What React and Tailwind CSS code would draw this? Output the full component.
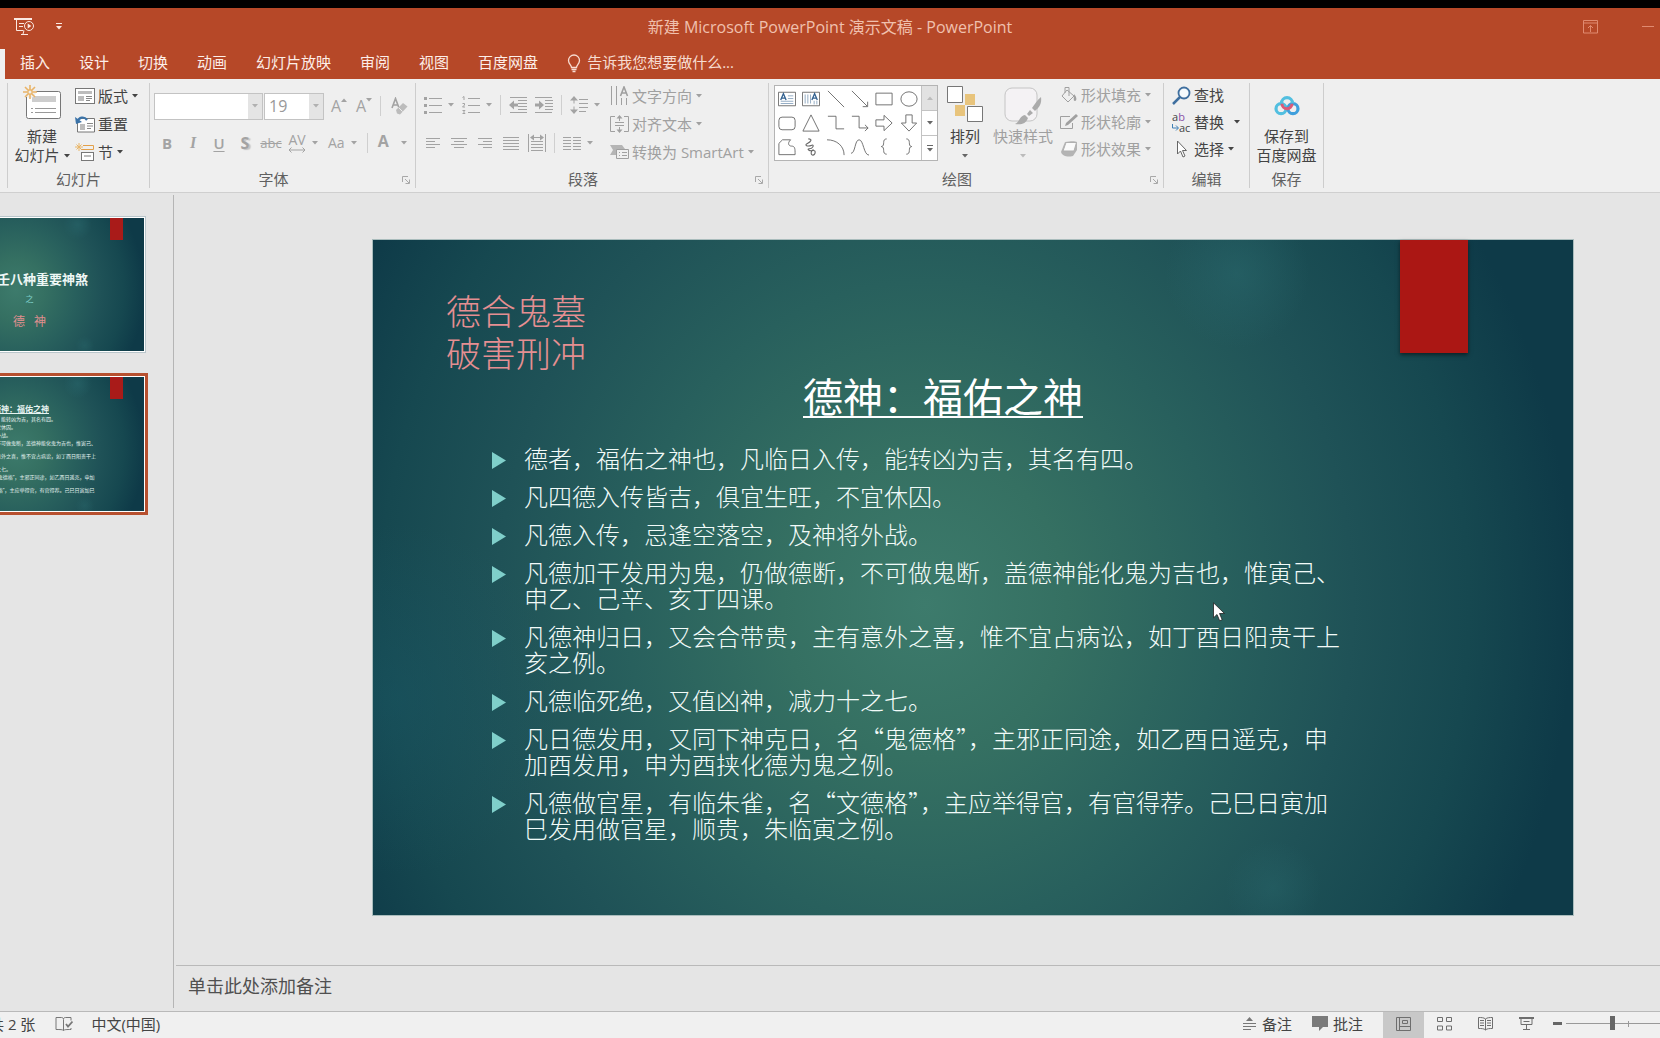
import clsx from "clsx"

const tabs = ["插入", "设计", "切换", "动画", "幻灯片放映", "审阅", "视图", "百度网盘"]

const points = [
  "德者，福佑之神也，凡临日入传，能转凶为吉，其名有四。",
  "凡四德入传皆吉，俱宜生旺，不宜休囚。",
  "凡德入传，忌逢空落空，及神将外战。",
  "凡德加干发用为鬼，仍做德断，不可做鬼断，盖德神能化鬼为吉也，惟寅己、申乙、己辛、亥丁四课。",
  "凡德神归日，又会合带贵，主有意外之喜，惟不宜占病讼，如丁酉日阳贵干上亥之例。",
  "凡德临死绝，又值凶神，减力十之七。",
  "凡日德发用，又同下神克日，名“鬼德格”，主邪正同途，如乙酉日遥克，申加酉发用，申为酉挟化德为鬼之例。",
  "凡德做官星，有临朱雀，名“文德格”，主应举得官，有官得荐。己巳日寅加巳发用做官星，顺贵，朱临寅之例。",
]

const slideBg =
  "bg-[radial-gradient(ellipse_6%_11%_at_72%_5%,#2a6a6e80,#2a6a6e00),radial-gradient(ellipse_4%_7%_at_75%_96%,#2a6a6e60,#2a6a6e00),radial-gradient(ellipse_14%_26%_at_2%_68%,#1a5a6866,#1a5a6800),radial-gradient(ellipse_54%_104%_at_46%_54%,#3d7b6c_0%,#357062_22%,#28605d_46%,#1f5257_66%,#164850_84%,#0e3a48_100%)]"

/* Small shared pieces */

function Caret({ className }) {
  return (
    <svg className={clsx("w-[6px] h-[4px] shrink-0", className)} viewBox="0 0 6 4" fill="currentColor" aria-hidden="true">
      <path d="M0 0h6L3 3.6z" />
    </svg>
  )
}

function Icon({ className = "w-[18px] h-[18px]", box = "0 0 18 18", children }) {
  return (
    <svg className={clsx("shrink-0", className)} viewBox={box} fill="none" stroke="currentColor" aria-hidden="true">
      {children}
    </svg>
  )
}

function Separator() {
  return <span className="w-px h-5 bg-[#cfcfcf] shrink-0" />
}

function Group({ label, launcher, width, children }) {
  return (
    <section className={clsx("flex flex-col my-1 border-r border-[#cdcdcd] shrink-0", width)} aria-label={label}>
      <div className="h-[88px] flex">{children}</div>
      <div className="flex items-center leading-[17px] text-[#606060]">
        <span className="flex-1 text-center">{label}</span>
        {launcher && (
          <button className="w-[18px] flex justify-center text-[#a8a8a8]" aria-label={`${label}选项`}>
            <Launcher />
          </button>
        )}
      </div>
    </section>
  )
}

function Launcher() {
  return (
    <Icon className="w-2 h-2" box="0 0 8 8">
      <path d="M.5 6V.5H6M3 3l4 4M7.5 3.5v4h-4" />
    </Icon>
  )
}

function IconButton({ label, width = "w-[18px]", caret, disabled = true, children }) {
  return (
    <button className={clsx("h-7 flex items-center shrink-0", caret ? "gap-[6px]" : "justify-center", !caret && width, disabled ? "text-[#a3a3a3]" : "text-[#444]")} aria-label={label}>
      {children}
      {caret && <Caret />}
    </button>
  )
}

function RowButton({ icon, label, caret, disabled, height = "h-7", caretGap = "ml-1" }) {
  return (
    <button className={clsx("flex items-center pb-[3px] whitespace-nowrap", height, disabled ? "text-[#a0a0a0]" : "text-[#444]")}>
      {icon}
      <span className="ml-[3px]">{label}</span>
      {caret && <Caret className={caretGap} />}
    </button>
  )
}

/* Title bar */

function TitleBar() {
  return (
    <div className="grid grid-cols-[1fr_auto_1fr] items-center h-[41px] pb-1 text-[#f5d9cf]">
      <div className="flex items-center pl-[14px] gap-[22px] text-[#fbe9e2]">
        <button aria-label="从头开始放映">
          <Icon className="w-5 h-5" box="0 0 20 20">
            <path d="M0 2h18" strokeWidth="2" />
            <path d="M2.5 3v10.5h7M5 6.500h5M5 9.500h4M7 17.500h7M9 17l1-3.500" />
            <circle cx="15" cy="9" r="4.500" />
            <path d="M13.700 6.500v5l3.600-2.500z" fill="currentColor" stroke="none" />
          </Icon>
        </button>
        <button aria-label="自定义快速访问工具栏">
          <Icon className="w-[6px] h-[7px]" box="0 0 6 7">
            <path d="M0 .5h6" />
            <path d="M0 3h6L3 6.600z" fill="currentColor" stroke="none" />
          </Icon>
        </button>
      </div>
      <h1 className="text-base leading-5 text-[#f0c0ae]">新建 Microsoft PowerPoint 演示文稿 - PowerPoint</h1>
      <div className="flex items-center justify-end gap-[44px] pr-[6px] text-[#e08a70]">
        <button aria-label="功能区显示选项">
          <Icon className="w-[15px] h-[14px]" box="0 0 15 14">
            <path d="M.5.500h14v12.500H.500zM.500 3h14M7.500 12V5.500M5 8l2.500-2.500L10 8" />
          </Icon>
        </button>
        <button aria-label="最小化">
          <Icon className="w-3 h-[14px]" box="0 0 12 14">
            <path d="M0 6.500h12" />
          </Icon>
        </button>
      </div>
    </div>
  )
}

function TabBar() {
  return (
    <nav className="flex h-[30px]">
      <span className="w-[5px] bg-[#f0f0f0]" />
      <div className="flex items-center gap-[29px] pl-[15px] pb-1 text-[#fdeee8]">
        {tabs.map((tab) => (
          <button key={tab}>{tab}</button>
        ))}
        <button className="flex items-center gap-[6px] text-[#f7dcd1]">
          <Icon className="w-[14px] h-[19px] mt-[2px]" box="0 0 14 19">
            <path d="M4.500 13.500c0-2.500-3-3.500-3-7a5.500 5.500 0 0 1 11 0c0 3.500-3 4.500-3 7zM4.500 15.500h5M5.500 17.500h3" strokeWidth="1.300" />
          </Icon>
          告诉我您想要做什么...
        </button>
      </div>
    </nav>
  )
}

/* Ribbon groups */

function SlidesGroup() {
  return (
    <Group label="幻灯片" width="w-[142px]">
      <button className="ml-[6px] w-[56px] flex flex-col items-center text-[#444] leading-[19px] whitespace-nowrap">
        <Icon className="w-[40px] h-[36px] mt-[1px] mb-[7px]" box="0 0 40 36">
          <rect x="4.500" y="7.500" width="34" height="27" rx="2" fill="#fff" stroke="#777" />
          <path d="M10 12h24v6H10z" fill="#cdcdcd" stroke="none" />
          <path d="M9 24.500h2M13 24.500h21M9 28.500h2M13 28.500h21" stroke="#999" />
          <circle cx="8" cy="8" r="6" fill="#efefef" stroke="none" />
          <path d="M8 1v4M8 11v4M1 8h4M11 8h4M3 3l3 3M10 10l3 3M13 3l-3 3M6 10l-3 3" stroke="#e9b468" strokeWidth="1.600" />
          <circle cx="8" cy="8" r="2.200" stroke="#e9b468" strokeWidth="1.400" />
        </Icon>
        <span>新建</span>
        <span className="flex items-center gap-1">
          幻灯片
          <Caret />
        </span>
      </button>
      <div className="ml-[5px] flex flex-col items-start">
        <RowButton
          label="版式"
          caret
          icon={
            <Icon className="w-5 h-4" box="0 0 20 16">
              <rect x=".5" y=".5" width="19" height="15" fill="#fff" stroke="#777" />
              <path d="M3 3h14v3H3zM3 8h6v5H3z" fill="#bdbdbd" stroke="none" />
              <path d="M11 8.500h6M11 10.500h6M11 12.500h4" stroke="#888" />
            </Icon>
          }
        />
        <RowButton
          label="重置"
          icon={
            <Icon className="w-5 h-[18px]" box="0 0 20 18">
              <path d="M6 3.500h13.500v13.500h-17V8" fill="#fff" stroke="#777" />
              <path d="M5 9h5v6H5z" fill="#bdbdbd" stroke="none" />
              <path d="M12 8.500h6M12 11h6M12 13.500h4" stroke="#888" />
              <path d="M2 7c2-5 7-6 10-2" stroke="#3b73a8" strokeWidth="2.200" />
              <path d="M0 2l1 7 6-2z" fill="#3b73a8" stroke="none" />
            </Icon>
          }
        />
        <RowButton
          label="节"
          caret
          icon={
            <Icon className="w-5 h-[18px]" box="0 0 20 18">
              <path d="M8 2.500h10.500v4H6" stroke="#e3a04a" />
              <path d="M4 0v8M0 4h8M1.500 1.500l5 5M6.500 1.500l-5 5" stroke="#e9b668" />
              <rect x="6.500" y="9.500" width="12" height="8" fill="#fff" stroke="#777" />
              <path d="M9 12h7v2H9z" fill="#bdbdbd" stroke="none" />
            </Icon>
          }
        />
      </div>
    </Group>
  )
}

function ComboBox({ label, width, options }) {
  return (
    <div className={clsx("relative h-[27px]", width)}>
      <select aria-label={label} className="appearance-none w-full h-full pl-1 border border-[#c3c3c3] bg-white text-base leading-6 text-[#999]">
        {options.map((o) => (
          <option key={o}>{o}</option>
        ))}
      </select>
      <span className="absolute right-px top-px bottom-px w-[14px] bg-[#e4e4e4] flex items-center justify-center text-[#b0b0b0] pointer-events-none">
        <Caret />
      </span>
    </div>
  )
}

function FontGroup() {
  return (
    <Group label="字体" launcher width="w-[266px]">
      <div className="pt-[9px] pl-1 flex flex-col gap-[9px]">
        <div className="flex items-center h-7 gap-px">
          <ComboBox label="字体名称" width="w-[109px]" options={[""]} />
          <ComboBox label="字号" width="w-[60px]" options={["19"]} />
          <span className="w-px" />
          <IconButton label="增大字号" width="w-6">
            <span className="text-base font-medium">A</span>
            <Caret className="rotate-180 mb-3" />
          </IconButton>
          <IconButton label="减小字号" width="w-6">
            <span className="text-base font-medium">A</span>
            <Caret className="mb-3" />
          </IconButton>
          <span className="w-0.5" />
          <Separator />
          <span className="w-1" />
          <IconButton label="清除格式" width="w-6">
            <Icon className="w-[17px] h-[18px]" box="0 0 17 18">
              <path d="M1 11L4.500 1.500 8 11M2.200 8h4.600" strokeWidth="1.600" />
              <path d="M5 13l7-7 4.500 3.500-7.500 8-3-1z" fill="#bcbcbc" stroke="none" />
              <path d="M7.500 10.500l4 4" stroke="#efefef" />
            </Icon>
          </IconButton>
        </div>
        <div className="flex items-center h-7">
          <IconButton label="加粗" width="w-[26px]">
            <b>B</b>
          </IconButton>
          <IconButton label="倾斜" width="w-[26px]">
            <i className="font-['Liberation_Serif',serif] font-bold text-base">I</i>
          </IconButton>
          <IconButton label="下划线" width="w-[26px]">
            <u className="font-semibold underline-offset-2">U</u>
          </IconButton>
          <IconButton label="文字阴影" width="w-[26px]">
            <b className="text-base [text-shadow:2px_1px_1px_#c4c4c4]">S</b>
          </IconButton>
          <IconButton label="删除线" width="w-[26px]">
            <s className="text-[13px]">abc</s>
          </IconButton>
          <span className="w-1" />
          <IconButton label="字符间距" caret>
            <span className="flex flex-col items-center leading-3 text-[14px]">
              AV
              <Icon className="w-[18px] h-[6px] mt-[1px]" box="0 0 18 6">
                <path d="M1 3h16M3.500.500L1 3l2.500 2.500M14.500.500L17 3l-2.500 2.500" />
              </Icon>
            </span>
          </IconButton>
          <span className="w-[10px]" />
          <IconButton label="更改大小写" caret>
            <span className="text-[14px]">Aa</span>
          </IconButton>
          <span className="w-[10px]" />
          <Separator />
          <span className="w-[10px]" />
          <button className="h-7 flex items-center gap-3 text-[#a3a3a3]" aria-label="字体颜色">
            <b className="text-base pb-1">A</b>
            <Caret />
          </button>
        </div>
      </div>
    </Group>
  )
}

function ParagraphGroup() {
  return (
    <Group label="段落" launcher width="w-[353px]">
      <div className="pt-[8px] pl-[8px] w-[194px] flex flex-col gap-[10px]">
        <div className="flex items-center gap-2">
          <IconButton label="项目符号" caret>
            <Icon>
              <path d="M5 2.500h13M5 9.500h13M5 16.500h13" />
              <path d="M0 1h3v3H0zM0 8h3v3H0zM0 15h3v3H0z" fill="currentColor" stroke="none" />
            </Icon>
          </IconButton>
          <IconButton label="编号" caret>
            <Icon>
              <path d="M6 2.500h12M6 9.500h12M6 16.500h12" />
              <path d="M.5 1.500l1.500-1V4M.5 7.500h2v1.500l-2 2h2.500M.5 14.500H3l-1.500 1.500L3 17.500H.5" />
            </Icon>
          </IconButton>
          <Separator />
          <IconButton label="降低列表级别">
            <Icon>
              <path d="M1 1.500h17M9 4.500h9M9 7.500h9M9 10.500h9M9 13.500h9M1 16.500h17" />
              <path d="M0 9l5-4.500v3h4v3H5v3z" fill="currentColor" stroke="none" />
            </Icon>
          </IconButton>
          <IconButton label="提高列表级别">
            <Icon>
              <path d="M0 1.500h17M10 4.500h8M10 7.500h8M10 10.500h8M10 13.500h8M0 16.500h17" />
              <path d="M9 9L4 4.500v3H0v3h4v3z" fill="currentColor" stroke="none" />
            </Icon>
          </IconButton>
          <Separator />
          <IconButton label="行距" caret>
            <Icon>
              <path d="M9 3.500h9M9 7.500h9M9 11.500h9M9 15.500h7M4 3v4.500M4 10.500V15" />
              <path d="M4 0l4 4.500H0zM4 18l4-4.500H0z" fill="currentColor" stroke="none" />
            </Icon>
          </IconButton>
        </div>
        <div className="flex items-center gap-2">
          <IconButton label="左对齐">
            <Icon>
              <path d="M2 4.500h14M2 7.500h9M2 10.500h14M2 13.500h9" />
            </Icon>
          </IconButton>
          <IconButton label="居中">
            <Icon>
              <path d="M1 4.500h16M4 7.500h10M1 10.500h16M4 13.500h10" />
            </Icon>
          </IconButton>
          <IconButton label="右对齐">
            <Icon>
              <path d="M2 4.500h14M7 7.500h9M2 10.500h14M7 13.500h9" />
            </Icon>
          </IconButton>
          <IconButton label="两端对齐">
            <Icon>
              <path d="M1 3.500h16M1 6.500h16M1 9.500h16M1 12.500h16M1 15.500h16" />
            </Icon>
          </IconButton>
          <IconButton label="分散对齐">
            <Icon>
              <path d="M.5 0v18M17.500 0v18M3 7.500h12M3 10.500h12M3 13.500h12M3 16.500h12M4 3.500h10" />
              <path d="M2 3.500L6 .5v6zM16 3.500l-4-3v6z" fill="currentColor" stroke="none" />
            </Icon>
          </IconButton>
          <Separator />
          <IconButton label="分栏" caret>
            <Icon>
              <path d="M0 3.500h8M0 6.500h8M0 9.500h8M0 12.500h8M0 15.500h8M10 3.500h8M10 6.500h8M10 9.500h8M10 12.500h8M10 15.500h8" />
            </Icon>
          </IconButton>
        </div>
      </div>
      <div className="flex flex-col items-start">
        <RowButton
          label="文字方向"
          caret
          disabled
          icon={
            <Icon className="w-[19px] h-5" box="0 0 19 20">
              <path d="M1.500 0v19M6.500 0v19M11.500 12v7M16.500 12v7" />
              <path d="M10.500 10L14 1l3.500 9M11.700 7h4.600" strokeWidth="1.600" />
            </Icon>
          }
        />
        <RowButton
          label="对齐文本"
          caret
          disabled
          icon={
            <Icon className="w-[19px] h-[18px]" box="0 0 19 18">
              <path d="M5 1.500H.500v15H5M14 1.500h4.500v15H14M5 7.500h9M5 10.500h9M9.500 1v5M9.500 12v5" />
              <path d="M9.500 0l3 3.500h-6zM9.500 18l3-3.500h-6z" fill="currentColor" stroke="none" />
            </Icon>
          }
        />
        <RowButton
          label="转换为 SmartArt"
          caret
          disabled
          icon={
            <Icon className="w-[19px] h-4" box="0 0 19 16">
              <path d="M0 1h12l3 4H8v6H0l3-5z" fill="#b5b5b5" stroke="none" />
              <path d="M6.500 5.500h12v9h-12z" fill="#efefef" />
              <path d="M9 8.500h1M12 8.500h5M9 11.500h1M12 11.500h5" />
            </Icon>
          }
        />
      </div>
    </Group>
  )
}

const shapes = [
  ["文本框", <g key="g"><path d="M.5 2.500h19v15H.500z" /><path d="M11 6.500h6M11 9.500h6M3 12.500h14M3 15h14" stroke="#8aa5c0" /><path d="M3 11l3-7 3 7M4 9h4" stroke="#31608f" strokeWidth="1.500" /></g>],
  ["竖排文本框", <g key="g"><path d="M.5 2.500h19v15H.500z" /><path d="M3.500 5v10M6.500 5v10M9.500 5v10M13.500 12v4M16.500 12v4" stroke="#8aa5c0" /><path d="M11 11l3-7 3 7M12 9h4" stroke="#31608f" strokeWidth="1.500" /></g>],
  ["直线", <path key="p" d="M1 1l18 18" />],
  ["箭头", <path key="p" d="M1 1l17 17M18.500 13v5.500H13" />],
  ["矩形", <path key="p" d="M1 3.500h18v13H1z" />],
  ["椭圆", <ellipse key="e" cx="10" cy="10" rx="9" ry="8" />],
  ["圆角矩形", <rect key="r" x="1" y="3.500" width="18" height="14" rx="3.500" />],
  ["三角形", <path key="p" d="M10 1l9 18H1z" />],
  ["肘形连接符", <path key="p" d="M1 2.500h9v14h9" />],
  ["肘形箭头", <path key="p" d="M1 2.500h8v13h10M15.500 12L19 15.500 15.500 19" />],
  ["右箭头", <path key="p" d="M1 6.500h9v-5l9 8.500-9 8.500v-5H1z" />],
  ["下箭头", <path key="p" d="M6.500 1v9h-5l8.500 9 8.500-9h-5V1z" />],
  ["任意多边形", <path key="p" d="M1 18.500V6l4-4h9c-4 4-2 7 1 7 4 0 4 3 4 9.500z" />],
  ["自由曲线", <path key="p" d="M7 1c5 0 3 3-1 5s0 4 5 2c3-1 1 4-3 4-3 0 0 3 4 2s3 5 0 5c-3 0-2-6 1-6" strokeWidth="1.200" />],
  ["弧形", <path key="p" d="M0 2c11 0 19 7 19 17" />],
  ["曲线", <path key="p" d="M0 17C5 17 4 2 9 2s5 17 11 17" />],
  ["左大括号", <path key="p" d="M13 1c-6 0-1 8-6 8.500 5 .5 0 8.500 6 8.500" />],
  ["右大括号", <path key="p" d="M7 1c6 0 1 8 6 8.500-5 .5 0 8.500-6 8.500" />],
]

function DrawingGroup() {
  return (
    <Group label="绘图" launcher width="w-[395px]">
      <div className="ml-[5px] mt-[2px] h-[76px] flex border border-[#b4b4b4] bg-white">
        <div className="grid grid-cols-6 content-center w-[146px]">
          {shapes.map(([name, drawing]) => (
            <button key={name} aria-label={name} className="w-6 h-6 flex items-center justify-center text-[#666]">
              <Icon className="w-[18px] h-[18px]" box="0 0 20 20">
                {drawing}
              </Icon>
            </button>
          ))}
        </div>
        <div className="w-4 flex flex-col border-l border-[#c3c3c3] divide-y divide-[#c3c3c3] text-[#666]">
          <button aria-label="上一行" className="flex-1 flex items-center justify-center bg-[#e2e2e2] text-[#bbb]">
            <Caret className="rotate-180" />
          </button>
          <button aria-label="下一行" className="flex-1 flex items-center justify-center">
            <Caret />
          </button>
          <button aria-label="其他形状" className="flex-1 flex items-center justify-center">
            <Icon className="w-[6px] h-[7px]" box="0 0 6 7">
              <path d="M0 .5h6" />
              <path d="M0 3h6L3 6.600z" fill="currentColor" stroke="none" />
            </Icon>
          </button>
        </div>
      </div>
      <button className="ml-[2px] w-[50px] flex flex-col items-center leading-[19px] text-[#444]">
        <Icon className="w-[36px] h-[36px] mt-[3px] mb-[5px]" box="0 0 36 36">
          <path d="M18 8h10v11H18zM8 19h10v11H8z" fill="#e8c47c" stroke="none" />
          <path d="M.5.500h15v16H.500zM20.500 20.500h15v15h-15z" fill="#fff" stroke="#777" />
        </Icon>
        <span>排列</span>
        <Caret className="mt-2 text-[#666]" />
      </button>
      <button className="ml-[2px] w-[62px] flex flex-col items-center leading-[19px] text-[#a0a0a0]">
        <Icon className="w-[38px] h-[38px] mt-[4px] mb-[2px]" box="0 0 38 38">
          <rect x="1" y="1" width="32" height="33" rx="7" stroke="#c4c4c4" fill="#f4f2f4" />
          <path d="M37 10c1 7-2 11-6 14l-3-3c3-4 5-8 9-11zM26 23l3 3-4 3-2-2zM21 28l3 3c-2 6-7 7-13 6 5-2 4-8 10-9z" fill="#ababab" stroke="none" />
        </Icon>
        <span>快速样式</span>
        <Caret className="mt-2 text-[#bbb]" />
      </button>
      <div className="ml-[6px] flex flex-col items-start">
        <RowButton
          label="形状填充"
          height="h-[27px]"
          caret
          disabled
          icon={
            <Icon>
              <path d="M7 4l7 6-6 6-6-6zM5 7V1.500h4V10" />
              <path d="M14 8c3 3 3 7 1 7s-1-3-1-7z" fill="currentColor" stroke="none" />
            </Icon>
          }
        />
        <RowButton
          label="形状轮廓"
          height="h-[27px]"
          caret
          disabled
          icon={
            <Icon>
              <path d="M10 3.500H.500v12h12V10" />
              <path d="M16 1l2 2-10 9-3 1 1-3z" fill="currentColor" stroke="none" />
            </Icon>
          }
        />
        <RowButton
          label="形状效果"
          height="h-[27px]"
          caret
          disabled
          icon={
            <Icon>
              <path d="M1 12l4-10c6-1 10-1 12 0v8l-4 6c-5 1-10 1-12-4z" fill="#b4b4b4" stroke="none" />
              <path d="M6 2.500h10.500L14 11H3z" fill="#fafafa" stroke="#b0b0b0" />
            </Icon>
          }
        />
      </div>
    </Group>
  )
}

function EditGroup() {
  return (
    <Group label="编辑" width="w-[86px]">
      <div className="pl-2 flex flex-col items-start">
        <RowButton
          label="查找"
          height="h-[27px]"
          icon={
            <Icon className="w-[19px] h-[19px]" box="0 0 19 19">
              <circle cx="12" cy="7" r="5.500" stroke="#3f6f9f" strokeWidth="1.800" fill="#f6fafd" />
              <path d="M8 11l-7 7" stroke="#3f6f9f" strokeWidth="2.500" />
            </Icon>
          }
        />
        <RowButton
          label="替换"
          height="h-[27px]"
          caret
          caretGap="ml-[10px]"
          icon={
            <span className="w-[19px] text-[11px] leading-[11px] text-left">
              <span className="block">
                a<span className="text-[#8a4fa8]">b</span>
              </span>
              <span className="flex items-center">
                <Icon className="w-[7px] h-[7px] text-[#3f7fb5]" box="0 0 7 7">
                  <path d="M.5 0v4H6M4 1.500L6.500 4 4 6.500" />
                </Icon>
                ac
              </span>
            </span>
          }
        />
        <RowButton
          label="选择"
          height="h-[27px]"
          caret
          icon={
            <Icon className="w-[19px] h-[18px]" box="0 0 19 18">
              <path d="M5.500 1v13l3-3 2.500 6 2-1-2.500-5.500h4z" fill="#fff" stroke="#666" />
            </Icon>
          }
        />
      </div>
    </Group>
  )
}

function SaveGroup() {
  return (
    <Group label="保存" width="w-[74px]">
      <button className="flex-1 flex flex-col items-center leading-[19px] text-[#444]">
        <Icon className="w-[26px] h-[22px] mt-[11px] mb-[11px]" box="0 0 28 24">
          <circle cx="7.500" cy="16" r="5.500" stroke="#52bfe0" strokeWidth="3.500" />
          <circle cx="20.500" cy="16" r="5.500" stroke="#3f9fdc" strokeWidth="3.500" />
          <path d="M8 10a6 6 0 0 1 12 0" stroke="#52bfe0" strokeWidth="3.500" />
          <path d="M8.500 10.500a5.500 5.500 0 0 0 11 0" stroke="#dc5a78" strokeWidth="3.200" />
        </Icon>
        <span>保存到</span>
        <span>百度网盘</span>
      </button>
    </Group>
  )
}

/* Slides */

function TitleThumbnail() {
  return (
    <button className="-ml-[95px] w-[241px] border border-[#b9c6cb] p-px bg-white block" aria-label="幻灯片 1">
      <div className={clsx("relative aspect-video flex flex-col pt-[52px] overflow-hidden", slideBg)}>
        <span className="absolute right-[21px] top-0 w-[13px] h-[22px] bg-[#a91b19]" />
        <span className="text-right pr-[56px] text-[13px] leading-[18px] font-bold text-[#eef7f5]">壬八种重要神煞</span>
        <span className="pl-2 text-center text-[8px] leading-[22px] text-[#7fd0cb]">之</span>
        <span className="pl-2 text-center text-[12px] leading-6 text-[#e08f8f]">德&ensp; 神</span>
      </div>
    </button>
  )
}

function ContentThumbnail() {
  return (
    <button className="-ml-[97px] w-[245px] border-3 border-[#b7502f] bg-white p-px block text-left" aria-label="幻灯片 2" aria-current="true">
      <div className={clsx("relative aspect-video overflow-hidden pt-[28px] pl-[19px] text-[#e6f3f1]", slideBg)}>
        <span className="absolute right-[21px] top-0 w-[13px] h-[22px] bg-[#a91b19]" />
        <span className="block pl-[67px] text-[8px] leading-[8px] font-bold underline">德神：福佑之神</span>
        <ul className="mt-[4px] w-[172px] flex flex-col gap-[3px] text-[5px] leading-[5px]">
          {points.map((p) => (
            <li key={p}>{p}</li>
          ))}
        </ul>
      </div>
    </button>
  )
}

function Slide() {
  return (
    <article className={clsx("relative aspect-video pt-[49px] pl-[73px] outline outline-[#a9bcbc]", slideBg)}>
      <span className="absolute right-[105px] top-0 w-[68px] h-[113px] bg-[#ab1714] shadow-[0_2px_4px_#00000080]" />
      <p className="w-[140px] text-[35px] leading-[42px] font-light text-[#e58f92]">德合鬼墓破害刑冲</p>
      <h2 className="ml-[357px] text-[40px] leading-[44px] text-white underline decoration-2 underline-offset-[4px]">德神：福佑之神</h2>
      <ul className="mt-[28px] ml-[46px] w-[850px] flex flex-col gap-3 text-2xl leading-[26px] font-light text-[#f2fbf9]">
        {points.map((p) => (
          <li key={p} className="flex">
            <svg className="w-[14px] h-[17px] mt-[7px] mr-[18px] shrink-0" viewBox="0 0 14 17" fill="#7fcfca" aria-hidden="true">
              <path d="M0 0l14 8.500L0 17z" />
            </svg>
            <span>{p}</span>
          </li>
        ))}
      </ul>
      <svg className="absolute left-[840px] top-[362px] w-[12px] h-[20px]" viewBox="0 0 12 20" aria-hidden="true">
        <path d="M.5.800v15l3.500-3.300 2.700 6.300 2.500-1.100L6.500 11.500h5z" fill="#fff" stroke="#222" strokeWidth=".8" />
      </svg>
    </article>
  )
}

/* Status bar */

function StatusBar() {
  return (
    <footer className="flex items-center h-[27px] pb-[3px] border-t border-[#b9b9b9] bg-[#f0f0f0] text-[#444] overflow-hidden whitespace-nowrap">
      <span className="-ml-[11px]">共 2 张</span>
      <button className="ml-5" aria-label="拼写检查">
        <Icon className="w-[18px] h-4 text-[#777]" box="0 0 18 16">
          <path d="M8.500 14.500c-1-1-3-1-7.500-1v-12h5.500c1.500 0 2 1 2 2zM8.500 3c0-1 1-1.500 2-1.500H16v3M8.500 14.500c1-1 3-1 7.500-1V12" />
          <path d="M11 8l2 2.500 4.500-5" strokeWidth="1.800" />
        </Icon>
      </button>
      <button className="ml-[18px]">中文(中国)</button>
      <div className="ml-auto flex items-center h-full">
        <button className="flex items-center gap-[6px]">
          <Icon className="w-[13px] h-[14px] text-[#777]" box="0 0 13 14">
            <path d="M0 6.500h13M0 9.500h13M0 12.500h8" />
            <path d="M6.500 0L10 4H3z" fill="currentColor" stroke="none" />
          </Icon>
          备注
        </button>
        <button className="ml-5 flex items-center gap-[5px]">
          <Icon className="w-4 h-[15px] text-[#7a7a7a]" box="0 0 16 15">
            <path d="M0 0h16v11h-5l-4 4v-4H0z" fill="currentColor" stroke="none" />
          </Icon>
          批注
        </button>
        <div className="ml-5 -mb-[3px] flex self-stretch text-[#6e6e6e]">
          <button className="w-[41px] pb-[3px] flex items-center justify-center bg-[#c8c8c8]" aria-label="普通视图" aria-pressed="true">
            <Icon className="w-[15px] h-[14px]" box="0 0 15 14">
              <path d="M.5.500h14v13H.500zM3.500.500v13M3.500 9.500h11M6.500 3.500h5v3h-5z" />
            </Icon>
          </button>
          <button className="w-[41px] pb-[3px] flex items-center justify-center" aria-label="幻灯片浏览">
            <Icon className="w-[15px] h-[14px]" box="0 0 15 14">
              <path d="M.5.500h5v4h-5zM9.500.500h5v4h-5zM.5 9h5v4h-5zM9.500 9h5v4h-5z" />
            </Icon>
          </button>
          <button className="w-[41px] pb-[3px] flex items-center justify-center" aria-label="阅读视图">
            <Icon className="w-[15px] h-[14px]" box="0 0 15 14">
              <path d="M7.500 2C6 .5 3 .5.500.500v11c3 0 5.500 0 7 1.500 1.500-1.500 4-1.500 7-1.500V.500c-2.500 0-5.500 0-7 1.500zM7.500 2v11M2 3.500h4M2 6h4M2 8.500h4M9 3.500h4M9 6h4M9 8.500h4" />
            </Icon>
          </button>
          <button className="w-[41px] pb-[3px] flex items-center justify-center" aria-label="幻灯片放映">
            <Icon className="w-[15px] h-[14px]" box="0 0 15 14">
              <path d="M0 1h15" strokeWidth="2" />
              <path d="M2 2v5.500h11V2M4.500 4.500h6M7.500 8v4M4 12.500h7" />
            </Icon>
          </button>
        </div>
        <button className="ml-[6px] w-[9px] h-[3px] bg-[#666]" aria-label="缩小" />
        <div className="relative ml-1 -mr-[30px] w-[124px] h-full flex items-center">
          <span className="absolute left-1/2 w-px h-[6px] bg-[#999]" />
          <input
            type="range"
            aria-label="缩放"
            defaultValue="37"
            className="w-full appearance-none bg-transparent [&::-webkit-slider-runnable-track]:h-px [&::-webkit-slider-runnable-track]:bg-[#999] [&::-webkit-slider-thumb]:appearance-none [&::-webkit-slider-thumb]:w-[5px] [&::-webkit-slider-thumb]:h-[14px] [&::-webkit-slider-thumb]:-mt-[7px] [&::-webkit-slider-thumb]:bg-[#666]"
          />
        </div>
      </div>
    </footer>
  )
}

function App() {
  return (
    <div lang="zh-CN" className="h-screen flex flex-col overflow-hidden bg-[#e5e5e5] font-['Open_Sans','Noto_Sans_CJK_SC',sans-serif] text-[15px] leading-5">
      <header className="border-t-8 border-black bg-[#b64828]">
        <TitleBar />
        <TabBar />
      </header>

      <div className="flex bg-[#efefef] border-b border-[#cfcfcf] whitespace-nowrap">
        <div className="w-2 my-1 border-r border-[#cdcdcd]" />
        <SlidesGroup />
        <FontGroup />
        <ParagraphGroup />
        <DrawingGroup />
        <EditGroup />
        <SaveGroup />
      </div>

      <div className="flex-1 min-h-0 flex">
        <aside className="w-[174px] mt-[2px] mb-[3px] pt-[21px] border-r border-[#b5b5b5] overflow-hidden flex flex-col gap-5">
          <TitleThumbnail />
          <ContentThumbnail />
        </aside>
        <main className="flex-1 min-w-0 flex flex-col font-['Noto_Sans_CJK_SC',sans-serif]">
          <div className="flex-1 pt-[47px] pl-[199px] pr-[87px]">
            <Slide />
          </div>
          <div className="ml-[2px] h-[46px] border-t border-[#b9b9b9]">
            <input aria-label="备注" placeholder="单击此处添加备注" className="w-full h-[38px] pl-3 bg-transparent text-lg placeholder:text-[#505050] outline-none" />
          </div>
        </main>
      </div>

      <StatusBar />
    </div>
  )
}

export default App
